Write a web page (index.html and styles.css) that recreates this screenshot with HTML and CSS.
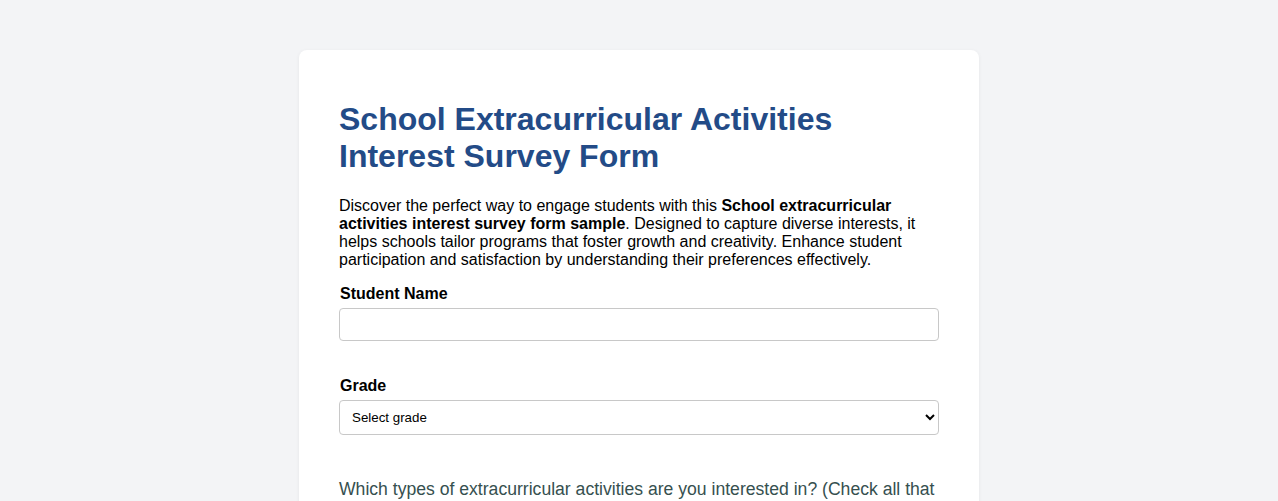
FILE: index.html
```html
<!DOCTYPE html>
<html>
<head>
<meta charset="utf-8">
<link rel="stylesheet" href="styles.css">
</head>
<body>
<div class="card">
  <h1 class="title">School Extracurricular Activities Interest Survey Form</h1>
  <p class="intro">Discover the perfect way to engage students with this <strong>School extracurricular activities interest survey form sample</strong>. Designed to capture diverse interests, it helps schools tailor programs that foster growth and creativity. Enhance student participation and satisfaction by understanding their preferences effectively.</p>
  <div class="field">
    <label class="label" for="name">Student Name</label>
    <input class="input" id="name" type="text">
  </div>
  <div class="field">
    <label class="label" for="grade">Grade</label>
    <select class="select" id="grade">
      <option>Select grade</option>
    </select>
  </div>
  <p class="question">Which types of extracurricular activities are you interested in? (Check all that apply)</p>
</div>
</body>
</html>
```
FILE: styles.css
```css
html, body {
  margin: 0;
  padding: 0;
  background: #f3f4f6;
  font-family: "Liberation Sans", Arial, sans-serif;
}
body {
  padding-top: 50px;
}
.card {
  width: 600px;
  margin: 0 auto;
  background: #ffffff;
  border-radius: 8px;
  box-shadow: 0 1px 4px rgba(0, 0, 0, 0.06);
  padding: 51px 40px 40px;
}
.title {
  margin: 0;
  font-size: 32px;
  line-height: 37px;
  font-weight: bold;
  color: #234b87;
}
.intro {
  margin: 22px 0 16px;
  font-size: 16px;
  line-height: 18px;
  color: #000;
}
.field {
  display: flex;
  flex-direction: column;
  margin-bottom: 36px;
}
.label {
  font-weight: bold;
  font-size: 16px;
  line-height: 18px;
  margin: 0 0 5px 1px;
  color: #000;
}
.input {
  box-sizing: border-box;
  width: 600px;
  height: 33px;
  border: 1px solid #c8c8c8;
  border-radius: 4px;
  margin: 0;
  font-family: "Liberation Sans", Arial, sans-serif;
}
.select {
  box-sizing: border-box;
  width: 600px;
  height: 35px;
  border: 1px solid #c8c8c8;
  border-radius: 4px;
  background: #fff;
  padding: 0 8px;
  margin: 0;
  font-size: 13.33px;
  font-family: "Liberation Sans", Arial, sans-serif;
  color: #000;
}
.question {
  margin: 44px 0 0;
  font-size: 17.6px;
  line-height: 21px;
  color: #36504f;
}
```
